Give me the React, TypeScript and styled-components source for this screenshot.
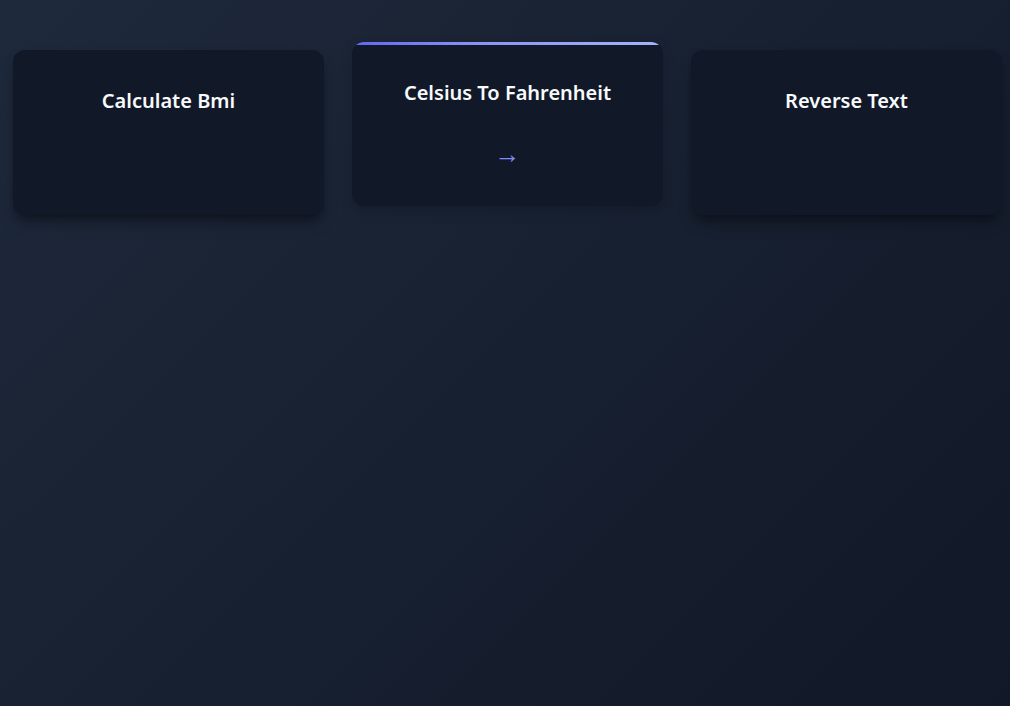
import React from "react";
import styled, { createGlobalStyle, css } from "styled-components";

const GlobalStyle = createGlobalStyle`
  html, body {
    margin: 0;
    padding: 0;
  }
  body {
    min-height: 100vh;
    background: linear-gradient(135deg, #1e293b 0%, #111827 100%);
    font-family: "Noto Sans", "Open Sans", sans-serif;
    color: #f8fafc;
  }
`;

const Page = styled.main`
  min-height: 100vh;
  box-sizing: border-box;
  padding: 50px 8px 0 13px;
`;

const Grid = styled.div`
  display: grid;
  grid-template-columns: repeat(3, 1fr);
  gap: 28px;
  align-items: start;
`;

const Card = styled.div<{ $active?: boolean }>`
  position: relative;
  box-sizing: border-box;
  height: 165px;
  padding: 32px 20px;
  border-radius: 12px;
  background: #111827;
  box-shadow: 0 10px 15px -3px rgba(0, 0, 0, 0.35), 0 4px 6px -4px rgba(0, 0, 0, 0.3);
  overflow: hidden;
  display: flex;
  flex-direction: column;
  align-items: center;
  ${(p) =>
    p.$active &&
    css`
      transform: translateY(-8px);
      height: 164px;
      box-shadow: 0 6px 14px rgba(0, 0, 0, 0.15);
      &::before {
        content: "";
        position: absolute;
        top: 0;
        left: 0;
        right: 0;
        height: 3px;
        background: linear-gradient(90deg, #6366f1, #8b93f5 40%, #a5b4fc);
      }
    `}
`;

const Title = styled.h3`
  margin: 0;
  font-size: 20px;
  line-height: 38px;
  font-weight: 600;
  color: #f8fafc;
  text-align: center;
`;

const Arrow = styled.span<{ $active?: boolean }>`
  margin-top: 29px;
  font-size: 26px;
  line-height: 24px;
  color: #818cf8;
  opacity: ${(p) => (p.$active ? 1 : 0)};
`;

const tools = [
  { name: "Calculate Bmi", active: false },
  { name: "Celsius To Fahrenheit", active: true },
  { name: "Reverse Text", active: false },
];

export default function App() {
  return (
    <>
      <GlobalStyle />
      <Page>
        <Grid>
          {tools.map((t) => (
            <Card key={t.name} $active={t.active}>
              <Title>{t.name}</Title>
              <Arrow $active={t.active}>→</Arrow>
            </Card>
          ))}
        </Grid>
      </Page>
    </>
  );
}
